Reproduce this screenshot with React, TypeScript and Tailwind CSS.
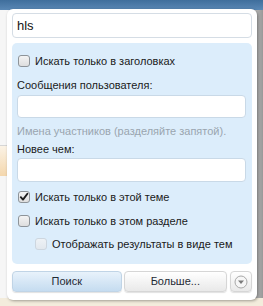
import React from "react";

function Box({ checked = false, disabled = false }: { checked?: boolean; disabled?: boolean }) {
  return (
    <span
      className={
        "relative inline-flex h-[12px] w-[12px] shrink-0 items-center justify-center rounded-[3px] border " +
        (disabled
          ? "border-[#cdd6df] bg-gradient-to-b from-[#eef2f6] to-[#e2e8ee]"
          : "border-[#8e9499] bg-gradient-to-b from-[#f4f4f4] to-[#dedede]")
      }
    >
      {checked && (
        <svg width="10" height="10" viewBox="0 0 10 10" className="absolute">
          <path d="M1.8 5.2 L4 7.6 L8.4 1.8" fill="none" stroke="#1d1d1d" strokeWidth="1.9" strokeLinecap="round" strokeLinejoin="round" />
        </svg>
      )}
    </span>
  );
}

export default function App() {
  const font = { fontFamily: '"Liberation Sans", Arial, sans-serif' };
  return (
    <div className="relative h-[306px] w-[263px] overflow-hidden bg-[#eef0f3]" style={font}>
      {/* background decoration */}
      <div className="absolute left-0 top-0 h-[10px] w-full bg-gradient-to-b from-[#3f6e9c] to-[#5a88b5]" />
      <div className="absolute left-0 top-[10px] h-[300px] w-[8px] bg-[#f6f6f6]" />
      <div className="absolute left-0 top-[145px] h-px w-[8px] bg-[#d6d6d6]" />
      <div className="absolute left-0 top-[146px] h-[30px] w-[8px] bg-gradient-to-b from-[#fbf3e6] to-[#f4d7ad]" />
      <div className="absolute right-0 top-[10px] h-[300px] w-[10px] bg-gradient-to-r from-[#c6c6c6] to-[#989898]" />
      <div className="absolute bottom-0 left-0 h-[8px] w-full bg-[#f3ecdc]" />

      {/* popup */}
      <div className="absolute left-[7px] top-[9px] flex h-[291px] w-[250px] flex-col rounded-[6px] bg-white px-[5px] pt-[4px] shadow-[1px_1px_3px_rgba(0,0,0,0.35)]">
        <div className="flex h-[25px] items-center rounded-[4px] border border-[#d5dde5] bg-white pl-[4px] text-[13px] text-[#141414]">
          hls
        </div>

        <div className="mt-[5px] flex flex-col rounded-[5px] bg-[#dcedfb] px-[5px] pb-[12px] pt-[10px] text-[11px] leading-[14px] text-[#1a1a1a]">
          <div className="flex h-[16px] items-center gap-[5px] pl-[1px]">
            <Box />
            <span>Искать только в заголовках</span>
          </div>

          <div className="mt-[9px] h-[14px]">Сообщения пользователя:</div>
          <div className="mt-[3px] h-[23px] w-[229px] rounded-[4px] border border-[#c9d9e7] bg-white" />
          <div className="mt-[6px] h-[14px] text-[#9aa5af]">Имена участников (разделяйте запятой).</div>

          <div className="mt-[4px] h-[14px]">Новее чем:</div>
          <div className="mt-[2px] h-[24px] w-[229px] rounded-[4px] border border-[#c9d9e7] bg-white" />

          <div className="mt-[7px] flex h-[16px] items-center gap-[5px] pl-[1px]">
            <Box checked />
            <span>Искать только в этой теме</span>
          </div>
          <div className="mt-[8px] flex h-[16px] items-center gap-[5px] pl-[1px]">
            <Box />
            <span>Искать только в этом разделе</span>
          </div>
          <div className="mt-[7px] flex h-[16px] items-center gap-[5px] pl-[18px]">
            <Box disabled />
            <span>Отображать результаты в виде тем</span>
          </div>
        </div>

        <div className="mt-[7px] flex h-[21px] gap-[2px] text-[11px] text-[#1f2a35]">
          <button className="flex w-[110px] items-center justify-center rounded-[4px] border border-[#c0d4e6] bg-gradient-to-b from-[#e8f2fb] to-[#c5dcf0] shadow-[0_1px_1px_rgba(0,0,0,0.12)]">
            Поиск
          </button>
          <button className="flex w-[104px] items-center justify-center rounded-[4px] border border-[#d6d6d6] bg-gradient-to-b from-[#ffffff] to-[#e9e9e9] shadow-[0_1px_1px_rgba(0,0,0,0.12)]">
            Больше...
          </button>
          <button className="ml-[1px] flex w-[22px] items-center justify-center rounded-[4px] border border-[#d6d6d6] bg-gradient-to-b from-[#ffffff] to-[#e9e9e9] shadow-[0_1px_1px_rgba(0,0,0,0.12)]">
            <svg width="14" height="14" viewBox="0 0 14 14">
              <circle cx="7" cy="7" r="6" fill="#f6f6f6" stroke="#a8a8a8" strokeWidth="1" />
              <path d="M4 5.5 L10 5.5 L7 9 Z" fill="#7a7a7a" />
            </svg>
          </button>
        </div>
      </div>
    </div>
  );
}
